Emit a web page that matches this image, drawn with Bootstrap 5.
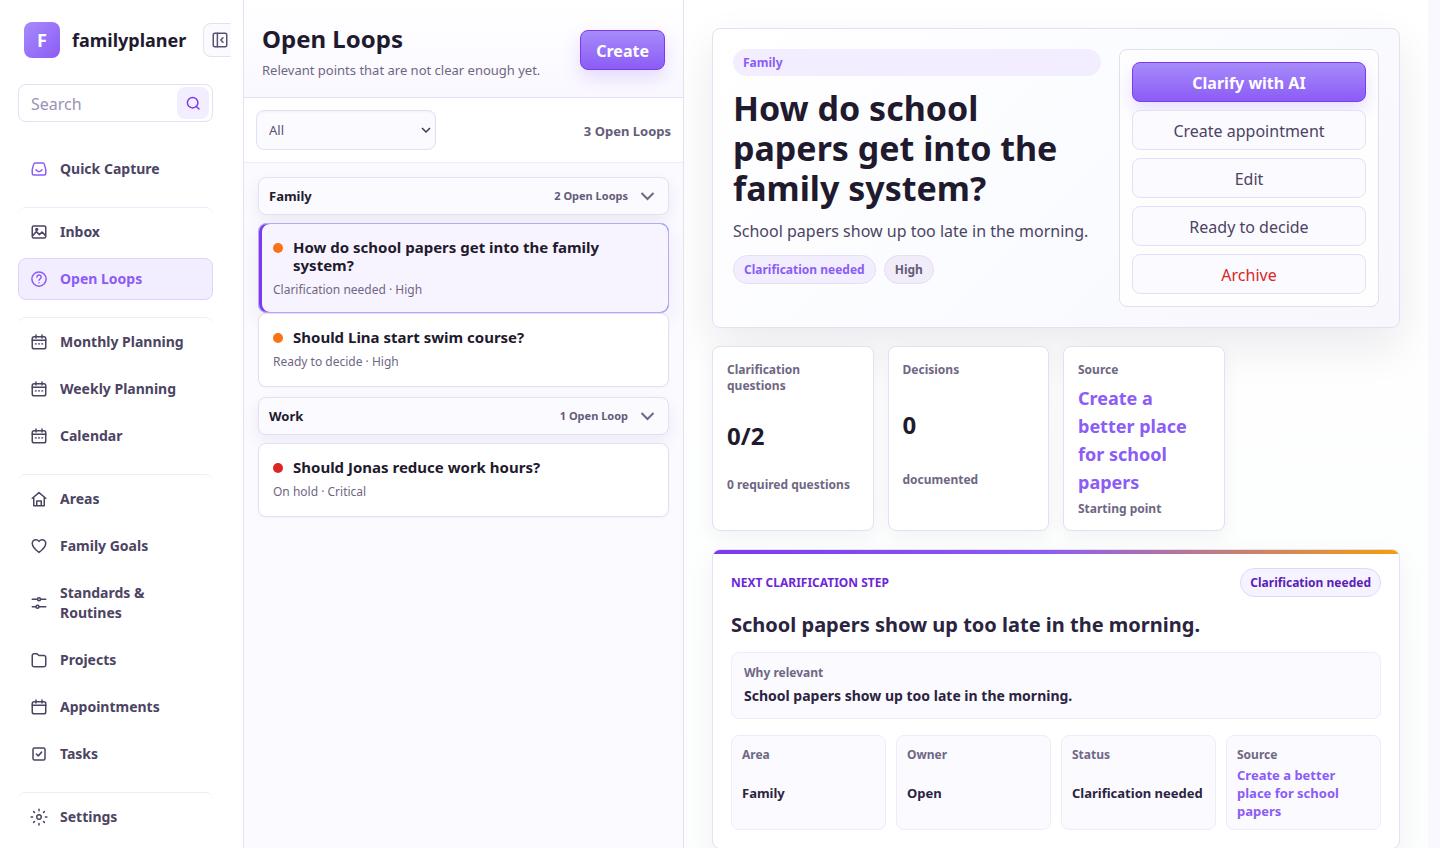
<!DOCTYPE html>
<html lang="en">
<head>
<meta charset="utf-8">
<meta name="viewport" content="width=device-width, initial-scale=1">
<title>familyplaner – Open Loops</title>
<link href="https://cdn.jsdelivr.net/npm/bootstrap@5.3.0/dist/css/bootstrap.min.css" rel="stylesheet">
<style>
:root{--ink:#1f1a2e;--ink-soft:#4c4463;--muted-ink:#6f6783;--violet:#8b5cf6;--violet-deep:#7c3aed;--line:#e4dff3;--line-soft:#efebfa;--tint:#f3eeff;--paper:#fbfaff}
body{font-family:"Noto Sans",sans-serif;color:var(--ink);background:#f9f8ff;font-size:16px}
a{text-decoration:none}
strong{font-weight:700}
.app-frame{height:100vh}
.stroke-icon{width:18px;height:18px;fill:none;stroke:currentColor;stroke-width:2;stroke-linecap:round;stroke-linejoin:round;flex:none}
.purple-btn{height:40px;border:1px solid var(--violet-deep);border-radius:8px;padding:2px 15px 0;color:#fff;font-weight:700;background:linear-gradient(180deg,#a78bfa,#8b5cf6);box-shadow:0 8px 18px rgba(139,92,246,.2)}

.side-panel{width:244px;flex:none;background:#fff;border-right:1px solid var(--line);padding-right:12px;overflow:hidden}
.side-inner{width:231px;padding:22px 18px 10px;overflow:hidden}
.brand-row{padding-left:6px;gap:12px;height:36px}
.brand-logo{width:36px;height:36px;border-radius:8px;flex:none;color:#fff;font-weight:700;font-size:18px;background:linear-gradient(135deg,#a78bfa,#8b5cf6)}
.brand-name{font-size:18px;font-weight:700;color:var(--ink)}
.fold-btn{width:34px;height:34px;flex:none;margin-left:5px;padding:0;border:1px solid var(--line);border-radius:8px;background:var(--paper);color:#5a5170}
.search-box{margin-top:26px;height:38px;border:1px solid var(--line);border-radius:8px;padding:2px 3px 2px 12px;background:#fff}
.search-box input{border:0;outline:0;min-width:0;width:100%;padding:2px 0 0;color:var(--ink);background:transparent}
.search-box input::placeholder{color:#9b92b3}
.search-btn{width:32px;height:32px;flex:none;border:0;padding:0;border-radius:8px;background:var(--tint);color:var(--violet-deep)}
.side-nav{margin-top:26px;gap:17px}
.side-group{gap:5px}
.side-group+.side-group{border-top:1px solid var(--line-soft);border-radius:8px;padding-top:3px}
.side-link{gap:12px;padding:10px 11px;border:1px solid transparent;border-radius:8px;font-size:14px;line-height:20px;font-weight:700;color:var(--ink-soft)}
.side-link.current{background:var(--tint);border-color:#ddd3fd;color:var(--violet)}
.side-link .violet{color:var(--violet)}

.loop-panel{width:440px;flex:none;border-right:1px solid var(--line);background:var(--paper);overflow:hidden}
.loop-head{height:98px;padding:3px 18px 0;border-bottom:1px solid var(--line);background:linear-gradient(180deg,#fff,#faf8ff)}
.loop-head h1{font-size:24px;line-height:34px;font-weight:700;margin:0 0 4px;padding-top:2px}
.loop-head p{font-size:13px;line-height:20px;margin:0;color:var(--muted-ink)}
.filter-bar{height:65px;padding:0 12px;background:#fff;border-bottom:1px solid var(--line-soft)}
.filter-pick{width:180px;height:40px;border:1px solid var(--line);border-radius:8px;font-size:13px;color:#5a5170;padding:2px 24px 0 12px;background-color:var(--paper);background-position:right 4px center;background-size:10px;box-shadow:inset 0 1px 2px rgba(60,40,110,.05);background-image:url("data:image/svg+xml,%3Csvg xmlns='http://www.w3.org/2000/svg' viewBox='0 0 10 10'%3E%3Cpath fill='none' stroke='%233f3655' stroke-width='1.5' d='M1 3l4 4 4-4'/%3E%3C/svg%3E")}
.loop-total{font-size:13px;line-height:18px;padding-top:2px;font-weight:700;color:#655c7a}
.loop-list{padding:14px}
.group-head{height:38px;padding:0 13px 0 10px;border:1px solid var(--line);border-radius:8px;background:var(--paper);box-shadow:0 6px 16px rgba(40,25,80,.07);margin-bottom:8px;color:var(--ink);font-size:13px;line-height:18px;font-weight:700}
.group-head small{font-size:11px;font-weight:700;color:#655c7a;margin-right:12px}
.group-head svg{width:15px;height:10px;fill:none;stroke:#6f6783;stroke-width:2}
.loop-card{display:flex;flex-direction:column;width:100%;text-align:left;min-height:74px;border:1px solid var(--line);border-radius:8px;background:#fff;box-shadow:0 1px 3px rgba(40,25,80,.04);color:var(--ink);overflow:hidden}
.loop-card-body{width:100%;padding:14px}
.loop-card.current{border-color:#b9a8fa;background:#5b8def;box-shadow:0 8px 22px rgba(60,35,130,.07)}
.loop-card.current .loop-card-body{border-radius:8px;background:#f8f4ff;box-shadow:inset 3px 0 0 var(--violet-deep)}
.loop-title{gap:10px;font-size:15px;line-height:18px;font-weight:700}
.loop-dot{width:10px;height:10px;border-radius:50%;margin-top:5px;flex:none;background:#f97316}
.loop-dot.critical{background:#dc2626}
.loop-meta{margin-top:7px;font-size:12px;line-height:17px;color:var(--muted-ink)}
.loop-set{margin-bottom:10px}

.detail-panel{min-width:0;margin-right:12px;padding:28px;background:linear-gradient(180deg,#fff,#fcfdfd);overflow-y:auto;overflow-x:hidden;scrollbar-width:none}
.detail-panel::-webkit-scrollbar{display:none}
.detail-stack{gap:18px}
.hero-box{gap:18px;padding:20px;border:1px solid var(--line);border-radius:8px;background:linear-gradient(135deg,#fff,#fafbff 60%,#f8f7fb);box-shadow:0 18px 45px rgba(30,25,50,.09)}
.hero-text{gap:12px;min-width:0}
.area-pill{height:27px;border-radius:14px;padding:0 10px;font-size:12px;line-height:27px;font-weight:700;color:var(--violet);background:var(--tint)}
.hero-text h2{font-size:34px;line-height:40px;font-weight:700;margin:0;max-width:340px}
.hero-text p{margin:0;line-height:23px;color:var(--ink-soft)}
.tag-pill{display:inline-block;height:29px;border:1px solid var(--line);border-radius:15px;padding:0 10px;font-size:12px;line-height:27px;font-weight:700;color:var(--violet);background:var(--tint)}
.tag-pill.neutral{background:#f1edf8;color:#655c7a}
.tag-pill.deep{padding:0 9px;color:#5b21b6;background:#f5f3ff;border-color:#ddd6fe}
.action-box{width:260px;flex:none;gap:8px;padding:12px;border:1px solid #e0e0ee;border-radius:8px;background:#fefeff}
.plain-btn{height:40px;border:1px solid var(--line);border-radius:8px;background:var(--paper);color:var(--ink-soft);padding:2px 0 0}
.plain-btn.danger{color:#dc2626}
.stat-grid{display:grid;grid-template-columns:repeat(4,minmax(0,1fr));gap:14px;min-height:185px}
.stat-box{display:grid;gap:4px;padding:15px 14px 13px;border:1px solid var(--line);border-radius:8px;background:#fff;box-shadow:0 6px 18px rgba(40,30,70,.05);font-size:12px;line-height:16px;font-weight:700;color:var(--muted-ink)}
.stat-box strong{font-size:24px;line-height:28px;color:var(--ink)}
.stat-box a{display:block;padding-top:2px;font-size:18px;color:var(--violet)}
.step-box{border:1px solid var(--line);border-radius:8px;background:#fff;overflow:hidden;box-shadow:0 10px 28px rgba(40,30,70,.05)}
.step-bar{height:4px;background:linear-gradient(90deg,#7c3aed,#8b5cf6 48%,#f59e0b)}
.step-body{padding:14px 18px 18px;gap:16px}
.step-label{font-size:12px;font-weight:700;color:#6d28d9}
.step-body h3{margin:0;font-size:20px;line-height:23px;font-weight:700;color:#2b2440}
.reason-box{padding:12px;border:1px solid var(--line-soft);border-radius:8px;background:var(--paper)}
.field-name{font-size:12px;line-height:16px;font-weight:700;color:var(--muted-ink)}
.reason-box p{margin:4px 0 0;font-size:14px;line-height:21px;font-weight:700;color:#2b2440}
.fact-grid{display:grid;grid-template-columns:repeat(4,minmax(0,1fr));gap:10px;min-height:95px}
.fact-box{display:grid;gap:3px;padding:11px 10px 9px;border:1px solid var(--line-soft);border-radius:8px;background:var(--paper)}
.fact-value{font-size:13px;line-height:18px;font-weight:700;color:#2b2440}
a.fact-value{color:var(--violet)}
</style>
</head>
<body>
<svg class="d-none" xmlns="http://www.w3.org/2000/svg">
  <symbol id="ic-cal" viewBox="0 0 24 24"><rect x="3" y="5" width="18" height="16" rx="2.5"/><path d="M3 9.500h18M8 2.500v4M16 2.500v4"/></symbol>
  <symbol id="ic-caldots" viewBox="0 0 24 24"><rect x="3" y="5" width="18" height="16" rx="2.5"/><path d="M3 9.500h18M8 2.500v4M16 2.500v4"/><path d="M7 14.500h1.500M11.300 14.500h1.500M15.600 14.500h1.500" stroke-width="1.5"/></symbol>
</svg>
<div class="app-frame d-flex overflow-hidden">
  <aside class="side-panel">
    <div class="side-inner">
      <div class="brand-row d-flex align-items-center">
        <span class="brand-logo d-flex align-items-center justify-content-center">F</span>
        <span class="brand-name">familyplaner</span>
        <button class="fold-btn d-flex align-items-center justify-content-center" type="button" aria-label="Collapse sidebar"><svg class="stroke-icon" viewBox="0 0 24 24"><rect x="3" y="3" width="18" height="18" rx="2"/><path d="M8.500 3v18M16 9l-3 3 3 3"/></svg></button>
      </div>
      <form class="search-box d-flex align-items-center" role="search">
        <input type="search" placeholder="Search" aria-label="Search">
        <button class="search-btn d-flex align-items-center justify-content-center" type="button" aria-label="Start search"><svg class="stroke-icon" viewBox="0 0 24 24"><circle cx="11.500" cy="11.500" r="7"/><path d="M17 17l3 3"/></svg></button>
      </form>
      <nav class="side-nav d-flex flex-column" aria-label="Main">
        <div class="side-group d-flex flex-column">
          <a class="side-link d-flex align-items-center" href="#"><svg class="stroke-icon violet" viewBox="0 0 24 24"><path d="M7 4h10a2 2 0 0 1 2 1.500l2 7V18a2 2 0 0 1-2 2H5a2 2 0 0 1-2-2v-5.500l2-7A2 2 0 0 1 7 4z"/><path d="M8 13q4 5 8 0"/></svg>Quick Capture</a>
        </div>
        <div class="side-group d-flex flex-column">
          <a class="side-link d-flex align-items-center" href="#"><svg class="stroke-icon" viewBox="0 0 24 24"><rect x="3" y="4" width="18" height="16" rx="2"/><path d="M3.500 17l5-5.500 4 4 3.500-3.500 4.500 4.500"/><circle cx="9" cy="8.500" r="1.300"/></svg>Inbox</a>
          <a class="side-link current d-flex align-items-center" href="#" aria-current="page"><svg class="stroke-icon" viewBox="0 0 24 24"><circle cx="12" cy="12" r="9.500"/><path d="M9.300 9.500a2.800 2.800 0 1 1 4.200 2.300c-1 .6-1.500 1-1.500 2M12 17v.1"/></svg>Open Loops</a>
        </div>
        <div class="side-group d-flex flex-column">
          <a class="side-link d-flex align-items-center" href="#"><svg class="stroke-icon"><use href="#ic-caldots"/></svg>Monthly Planning</a>
          <a class="side-link d-flex align-items-center" href="#"><svg class="stroke-icon"><use href="#ic-caldots"/></svg>Weekly Planning</a>
          <a class="side-link d-flex align-items-center" href="#"><svg class="stroke-icon"><use href="#ic-caldots"/></svg>Calendar</a>
        </div>
        <div class="side-group d-flex flex-column">
          <a class="side-link d-flex align-items-center" href="#"><svg class="stroke-icon" viewBox="0 0 24 24"><path d="M3 11l9-7.500 9 7.500M5 9.500V21h14V9.500M9 21v-6.500h6V21"/></svg>Areas</a>
          <a class="side-link d-flex align-items-center" href="#"><svg class="stroke-icon" viewBox="0 0 24 24"><path d="M12 20.500C6 16 3 12 3 8.200A4.700 4.700 0 0 1 7.700 3.500C9.600 3.500 11.200 4.600 12 6c.8-1.400 2.400-2.500 4.300-2.500A4.700 4.700 0 0 1 21 8.200c0 3.800-3 7.800-9 12.300z"/></svg>Family Goals</a>
          <a class="side-link d-flex align-items-center" href="#"><svg class="stroke-icon" viewBox="0 0 24 24"><path d="M3 7h7M14 7h7M3 17h5M12 17h9"/><circle cx="12" cy="7" r="2"/><circle cx="10" cy="17" r="2"/></svg>Standards &amp; Routines</a>
          <a class="side-link d-flex align-items-center" href="#"><svg class="stroke-icon" viewBox="0 0 24 24"><path d="M3 6a2.500 2.500 0 0 1 2.500-2.500H9L12 6h6.500A2.500 2.500 0 0 1 21 8.500v10a2.500 2.500 0 0 1-2.500 2.500h-13A2.500 2.500 0 0 1 3 18.500z"/></svg>Projects</a>
          <a class="side-link d-flex align-items-center" href="#"><svg class="stroke-icon"><use href="#ic-cal"/></svg>Appointments</a>
          <a class="side-link d-flex align-items-center" href="#"><svg class="stroke-icon" viewBox="0 0 24 24"><rect x="4" y="4" width="16" height="16" rx="2"/><path d="M8.500 12l2.500 2.500 4.500-5"/></svg>Tasks</a>
        </div>
        <div class="side-group d-flex flex-column">
          <a class="side-link d-flex align-items-center" href="#"><svg class="stroke-icon" viewBox="0 0 24 24"><circle cx="12" cy="12" r="3"/><path d="M12 1.500v2M12 20.500v2M1.500 12h2M20.500 12h2M4.800 4.800L6 6M18 18l1.200 1.200M4.800 19.200L6 18M18 6l1.200-1.200"/></svg>Settings</a>
        </div>
      </nav>
    </div>
  </aside>

  <section class="loop-panel" aria-label="Open Loops">
    <header class="loop-head d-flex align-items-center justify-content-between">
      <div>
        <h1>Open Loops</h1>
        <p>Relevant points that are not clear enough yet.</p>
      </div>
      <button class="purple-btn" type="button">Create</button>
    </header>
    <div class="filter-bar d-flex align-items-center justify-content-between">
      <select class="form-select filter-pick" aria-label="Filter"><option>All</option></select>
      <span class="loop-total">3 Open Loops</span>
    </div>
    <div class="loop-list">
      <div class="loop-set">
        <button class="group-head d-flex align-items-center w-100" type="button"><span class="me-auto">Family</span><small>2 Open Loops</small><svg viewBox="0 0 15 10"><path d="M1.500 2l6 6 6-6"/></svg></button>
        <button class="loop-card current p-0" type="button">
          <div class="loop-card-body">
            <div class="loop-title d-flex"><span class="loop-dot"></span><span>How do school papers get into the family system?</span></div>
            <div class="loop-meta">Clarification needed · High</div>
          </div>
        </button>
        <button class="loop-card p-0" type="button">
          <div class="loop-card-body">
            <div class="loop-title d-flex"><span class="loop-dot"></span><span>Should Lina start swim course?</span></div>
            <div class="loop-meta">Ready to decide · High</div>
          </div>
        </button>
      </div>
      <div class="loop-set">
        <button class="group-head d-flex align-items-center w-100" type="button"><span class="me-auto">Work</span><small>1 Open Loop</small><svg viewBox="0 0 15 10"><path d="M1.500 2l6 6 6-6"/></svg></button>
        <button class="loop-card p-0" type="button">
          <div class="loop-card-body">
            <div class="loop-title d-flex"><span class="loop-dot critical"></span><span>Should Jonas reduce work hours?</span></div>
            <div class="loop-meta">On hold · Critical</div>
          </div>
        </button>
      </div>
    </div>
  </section>

  <main class="detail-panel flex-grow-1">
    <div class="detail-stack d-flex flex-column">
      <section class="hero-box d-flex">
        <div class="hero-text d-flex flex-column flex-grow-1">
          <div class="area-pill">Family</div>
          <h2>How do school papers get into the family system?</h2>
          <p>School papers show up too late in the morning.</p>
          <div class="d-flex gap-2"><span class="tag-pill">Clarification needed</span><span class="tag-pill neutral">High</span></div>
        </div>
        <div class="action-box d-flex flex-column">
          <button class="purple-btn" type="button">Clarify with AI</button>
          <button class="plain-btn" type="button">Create appointment</button>
          <button class="plain-btn" type="button">Edit</button>
          <button class="plain-btn" type="button">Ready to decide</button>
          <button class="plain-btn danger" type="button">Archive</button>
        </div>
      </section>

      <section class="stat-grid">
        <div class="stat-box"><span>Clarification questions</span><strong>0/2</strong><span>0 required questions</span></div>
        <div class="stat-box"><span>Decisions</span><strong>0</strong><span>documented</span></div>
        <div class="stat-box"><span>Source</span><strong><a href="#">Create a better place for school papers</a></strong><span>Starting point</span></div>
      </section>

      <section class="step-box">
        <div class="step-bar"></div>
        <div class="step-body d-flex flex-column">
          <div class="d-flex align-items-center justify-content-between">
            <span class="step-label text-uppercase">Next clarification step</span>
            <span class="tag-pill deep">Clarification needed</span>
          </div>
          <h3>School papers show up too late in the morning.</h3>
          <div class="reason-box">
            <div class="field-name">Why relevant</div>
            <p>School papers show up too late in the morning.</p>
          </div>
          <div class="fact-grid">
            <div class="fact-box"><span class="field-name">Area</span><span class="fact-value">Family</span></div>
            <div class="fact-box"><span class="field-name">Owner</span><span class="fact-value">Open</span></div>
            <div class="fact-box"><span class="field-name">Status</span><span class="fact-value">Clarification needed</span></div>
            <div class="fact-box"><span class="field-name">Source</span><a class="fact-value" href="#">Create a better place for school papers</a></div>
          </div>
        </div>
      </section>
    </div>
  </main>
</div>
<script src="https://cdn.jsdelivr.net/npm/bootstrap@5.3.0/dist/js/bootstrap.bundle.min.js"></script>
</body>
</html>
